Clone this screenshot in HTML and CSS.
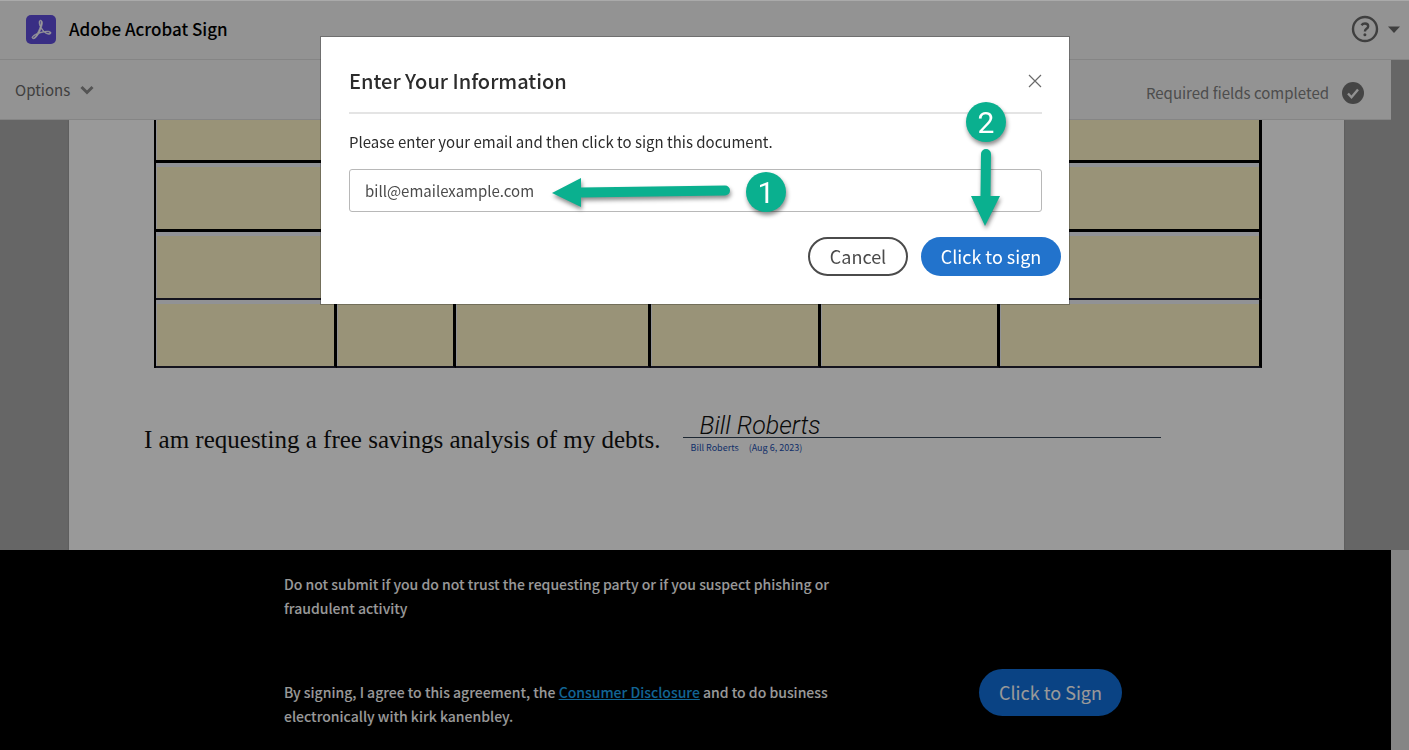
FILE: index.html
```
<!DOCTYPE html>
<html lang="en">
<head>
<meta charset="utf-8">
<title>Adobe Acrobat Sign</title>
<link rel="stylesheet" href="styles.css">
</head>
<body>
<div class="app">
  <header class="topbar">
    <svg class="logo" viewBox="0 0 30 29" aria-hidden="true">
      <rect width="30" height="29" rx="5" fill="#5f4ddc"/>
      <path transform="translate(6 5) scale(.79)" fill="#fff" stroke="#fff" stroke-width=".9" d="M23.63 15.3c-.71-.745-2.166-1.17-4.224-1.17-1.1 0-2.377.106-3.761.354a19.443 19.443 0 0 1-2.307-2.661c-.532-.71-.994-1.49-1.42-2.236.817-2.484 1.207-4.507 1.207-5.962 0-1.632-.603-3.336-2.342-3.336-.532 0-1.065.32-1.349.781-.78 1.384-.425 4.4.923 7.381a60.277 60.277 0 0 1-1.703 4.507c-.568 1.349-1.207 2.733-1.917 4.01C2.834 18.53.314 20.34.03 21.758c-.106.533.071 1.03.462 1.42.142.107.639.533 1.49.533 2.59 0 5.323-4.188 6.707-6.707 1.065-.355 2.13-.71 3.194-.994a34.963 34.963 0 0 1 3.407-.745c2.732 2.448 5.145 2.839 6.352 2.839 1.49 0 2.023-.604 2.2-1.1.32-.64.106-1.349-.213-1.704zm-1.42 1.03c-.107.532-.64.887-1.384.887-.213 0-.39-.036-.604-.071-1.348-.32-2.626-.994-3.903-2.059a17.717 17.717 0 0 1 2.98-.248c.746 0 1.385.035 1.81.142.497.106 1.278.426 1.1 1.348zm-7.524-1.668a38.01 38.01 0 0 0-2.945.674 39.68 39.68 0 0 0-2.52.745 40.05 40.05 0 0 0 1.207-2.555c.426-.994.78-2.023 1.136-2.981.354.603.745 1.207 1.135 1.739a50.127 50.127 0 0 0 1.987 2.378zM10.038 1.46a.768.768 0 0 1 .674-.425c.745 0 .887.851.887 1.526 0 1.135-.355 2.874-.958 4.861-1.03-2.768-1.1-5.074-.603-5.962zM6.134 17.997c-1.81 2.981-3.549 4.826-4.613 4.826a.872.872 0 0 1-.532-.177c-.213-.213-.32-.461-.249-.745.213-1.065 2.271-2.555 5.394-3.904z"/>
    </svg>
    <span class="brand">Adobe Acrobat Sign</span>
    <button class="help" type="button" aria-label="Help">
      <svg width="50" height="28" viewBox="0 0 50 28" fill="none" aria-hidden="true">
        <circle cx="14" cy="14" r="12" stroke="#6a6a6a" stroke-width="2.400"/>
        <path d="M10.500 10.200Q11.700 8.500 14 8.500Q17.200 8.500 17.200 11.200Q17.200 12.600 15.500 13.800Q13.900 15 13.900 16.500" stroke="#6a6a6a" stroke-width="2.400"/>
        <circle cx="13.900" cy="19.700" r="1.500" fill="#6a6a6a"/>
        <path d="M37 11.500h12L43 18z" fill="#6a6a6a"/>
      </svg>
    </button>
  </header>
  <nav class="toolbar">
    <button class="options" type="button">Options
      <svg width="14" height="10" viewBox="0 0 14 10" fill="none" aria-hidden="true"><path d="M1.500 2L7 7.500L12.500 2" stroke="#8c8c8c" stroke-width="3"/></svg>
    </button>
    <span class="status">Required fields completed
      <svg width="22" height="22" viewBox="0 0 22 22" aria-hidden="true"><circle cx="11" cy="11" r="11" fill="#747474"/><path d="M6 11.500L9.500 15.200L16 7.500" fill="none" stroke="#f5f5f5" stroke-width="2.400"/></svg>
    </span>
  </nav>
  <main class="viewer">
    <article class="sheet">
      <table class="debts" aria-label="Debts">
        <colgroup><col class="c1"><col class="c2"><col class="c3"><col class="c4"><col class="c5"><col class="c6"></colgroup>
        <tbody>
          <tr class="cut"><td></td><td></td><td></td><td></td><td></td><td></td></tr>
          <tr><td></td><td></td><td></td><td></td><td></td><td></td></tr>
          <tr class="thin"><td></td><td></td><td></td><td></td><td></td><td></td></tr>
          <tr class="thin"><td></td><td></td><td></td><td></td><td></td><td></td></tr>
        </tbody>
      </table>
      <div class="sign-row">
        <p class="request">I am requesting a free savings analysis of my debts.</p>
        <div class="signature">
          <span class="script">Bill Roberts</span>
          <span class="signed"><span>Bill Roberts</span><span>(Aug 6, 2023)</span></span>
        </div>
      </div>
    </article>
  </main>
  <footer class="footer">
    <div class="consent">
      <div class="terms">
        <p>Do not submit if you do not trust the requesting party or if you suspect phishing or fraudulent activity</p>
        <p>By signing, I agree to this agreement, the <a href="#disclosure">Consumer Disclosure</a> and to do business electronically with kirk kanenbley.</p>
      </div>
      <button class="pill submit" type="button">Click to Sign</button>
    </div>
  </footer>
</div>
<div class="backdrop">
  <form class="dialog" role="dialog" aria-labelledby="title">
    <div class="dialog-head">
      <h1 id="title">Enter Your Information</h1>
      <button class="close" type="button" aria-label="Close">
        <svg width="14" height="14" viewBox="0 0 14 14" aria-hidden="true"><path d="M1 1L13 13M13 1L1 13" stroke="#6a6a6a" stroke-width="1.200"/></svg>
      </button>
    </div>
    <label for="email">Please enter your email and then click to sign this document.</label>
    <input id="email" type="text" value="bill@emailexample.com">
    <div class="actions">
      <button class="pill cancel" type="button">Cancel</button>
      <button class="pill confirm" type="button">Click to sign</button>
    </div>
    <svg class="arrow arrow-left" width="180" height="40" viewBox="0 0 180 40" aria-hidden="true"><path d="M1 20L30 5V14.500L174 12.500A5 5 0 0 1 174 22.500L30 24.500V34z" fill="#0ab08f"/></svg>
    <svg class="arrow arrow-down" width="40" height="82" viewBox="0 0 40 82" aria-hidden="true"><path d="M15 6A5 5 0 0 1 25 6L24.500 48H34L19 78L5 48H14.500z" fill="#0ab08f"/></svg>
    <span class="step step-one">1</span>
    <span class="step step-two">2</span>
  </form>
</div>
</body>
</html>
```
FILE: styles.css
```
* { box-sizing: border-box; }

body {
  margin: 0;
  background: #eef3f0;
  font-family: "Noto Sans CJK SC", "Noto Sans", sans-serif;
  font-size: 15px;
  line-height: 24px;
  color: #2c2c2c;
}

h1, p { margin: 0; }
button, input { font: inherit; }
button { border: 0; padding: 0; background: none; cursor: pointer; }
svg { display: block; flex: none; }

.app {
  display: flex;
  flex-direction: column;
  height: 100vh;
  padding-top: 1px;
  background: #aaa;
}

.topbar {
  display: flex;
  align-items: center;
  flex: none;
  height: 59px;
  padding: 0 8px 2px 26px;
  background: #f5f5f5;
  border-bottom: 1px solid #dedede;
}
.logo { width: 30px; height: 29px; }
.brand { margin-left: 13px; font-size: 17px; font-weight: 500; color: #000; }
.help { margin-left: auto; }

.toolbar {
  display: flex;
  align-items: center;
  justify-content: space-between;
  flex: none;
  height: 60px;
  margin-right: 18px;
  padding: 0 27px 0 15px;
  background: #f5f5f5;
  border-bottom: 1px solid #dedede;
}
.options { display: flex; align-items: center; gap: 10px; color: #6a6a6a; }
.status { display: flex; align-items: center; gap: 13px; padding-top: 6px; color: #808080; }

.viewer { flex: 1; min-height: 0; overflow: hidden; padding: 0 65px 0 69px; }
.sheet { height: 100%; padding: 0 82px 0 85px; background: #fff; box-shadow: 0 0 2px #888; }

.debts { width: 100%; table-layout: fixed; border-collapse: separate; border-spacing: 0; border-left: 2px solid #000; }
.debts td {
  height: 69px;
  padding: 0;
  border-right: 3px solid #000;
  border-bottom: 3px solid #000;
  background: #fff5c8;
  box-shadow: inset 0 4px #f2f4f8, inset 1px 0 #f2f4f8;
}
.debts .cut td { height: 43px; box-shadow: inset 1px 0 #f2f4f8; }
.debts .thin td { height: 68px; border-bottom: 2px solid #223; }
.c1 { width: 16.4%; } .c2 { width: 10.7%; } .c3 { width: 17.7%; }
.c4 { width: 15.3%; } .c5 { width: 16.2%; } .c6 { width: 23.7%; }

.sign-row { display: flex; gap: 22px; margin: 42px 0 0 -10px; }
.request { padding-top: 14px; font-family: "Liberation Serif", serif; font-size: 25px; line-height: 32px; color: #111; white-space: nowrap; }
.signature { flex: none; width: 478px; }
.script {
  display: block;
  height: 28px;
  padding-left: 17px;
  border-bottom: 1px solid #345;
  font-family: Roboto, "Liberation Sans", sans-serif;
  font-size: 25px;
  font-style: italic;
  font-weight: 300;
  line-height: 32px;
  color: #111;
}
.signed { display: flex; gap: 10px; padding-left: 8px; font-size: 9px; line-height: 20px; color: #1c50b0; }

.footer { flex: none; margin-right: 18px; padding: 22px 0 22px; background: #000; box-shadow: 18px 0 #dedede; }
.consent { display: flex; justify-content: space-between; align-items: flex-end; margin: 0 269px 0 284px; }
.terms { display: grid; gap: 60px; width: 560px; font-size: 14px; font-weight: 500; color: #fff; }
.terms a { color: #1ea8f5; }

.pill { border-radius: 24px; padding-bottom: 2px; font-size: 18px; line-height: 24px; }
.submit { width: 143px; height: 47px; margin-bottom: 12px; background: #1170dc; color: #fff; }

.backdrop {
  position: fixed;
  inset: 1px 0 0;
  display: flex;
  justify-content: center;
  align-items: flex-start;
  padding: 36px 19px 0 0;
  background: rgba(0, 0, 0, .4);
}
.dialog {
  position: relative;
  display: flex;
  flex-direction: column;
  width: 100%;
  max-width: 748px;
  padding: 28px 27px 28px 28px;
  background: #fff;
  box-shadow: 0 0 0 1px rgba(0, 0, 0, .25);
}
.dialog-head { display: flex; justify-content: space-between; align-items: center; padding-bottom: 15px; border-bottom: 2px solid #e4e4e4; }
.dialog h1 { font-size: 20px; font-weight: 500; line-height: 32px; }
.dialog label { margin: 16px 0 15px; }
.dialog input { width: 100%; height: 43px; padding: 0 15px; border: 1px solid #b8b8b8; border-radius: 3px; color: #4b4b4b; outline: 0; }
.actions { display: flex; justify-content: flex-end; gap: 13px; margin: 25px -19px 0 0; }
.cancel { width: 100px; height: 39px; border: 2px solid #4b4b4b; color: #4b4b4b; }
.confirm { width: 140px; height: 39px; background: #2273cc; color: #fff; }

.arrow, .step { position: absolute; filter: drop-shadow(1px 3px 2px rgba(0, 0, 0, .45)); }
.arrow-left { left: 230px; top: 136px; }
.arrow-down { left: 645px; top: 111px; }
.step {
  width: 40px;
  height: 40px;
  border-radius: 50%;
  background: #0ab08f;
  color: #fff;
  font-family: Roboto, "Liberation Sans", sans-serif;
  font-size: 30px;
  line-height: 42px;
  text-align: center;
}
.step-one { left: 425px; top: 135px; }
.step-two { left: 645px; top: 65px; }
```
